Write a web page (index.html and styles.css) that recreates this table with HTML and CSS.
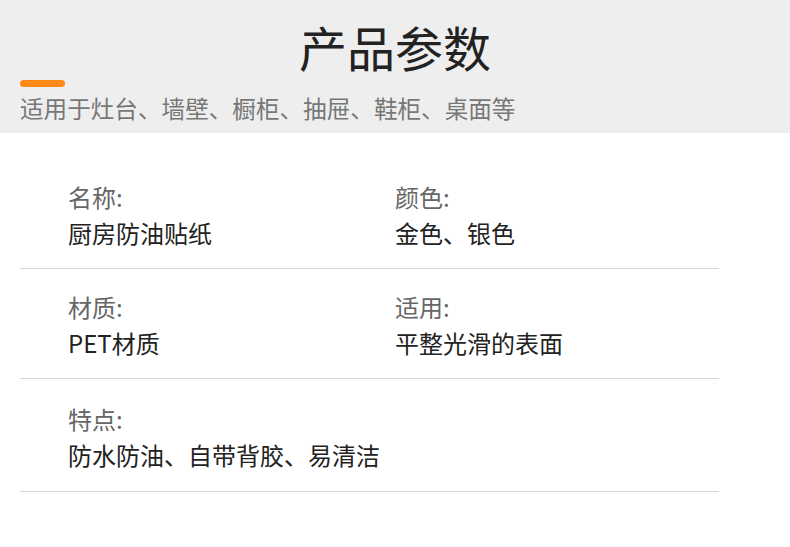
FILE: index.html
```html
<!DOCTYPE html>
<html lang="zh-CN">
<head>
<meta charset="utf-8">
<title>产品参数</title>
<link rel="stylesheet" href="styles.css">
</head>
<body>
<header class="hero">
  <h1 class="hero-title">产品参数</h1>
  <div class="hero-bar"></div>
  <p class="hero-sub">适用于灶台、墙壁、橱柜、抽屉、鞋柜、桌面等</p>
</header>
<main class="specs">
  <div class="spec-row">
    <div class="spec">
      <div class="spec-label">名称:</div>
      <div class="spec-value">厨房防油贴纸</div>
    </div>
    <div class="spec">
      <div class="spec-label">颜色:</div>
      <div class="spec-value">金色、银色</div>
    </div>
  </div>
  <div class="spec-row">
    <div class="spec">
      <div class="spec-label">材质:</div>
      <div class="spec-value">PET材质</div>
    </div>
    <div class="spec">
      <div class="spec-label">适用:</div>
      <div class="spec-value">平整光滑的表面</div>
    </div>
  </div>
  <div class="spec-row spec-row-last">
    <div class="spec">
      <div class="spec-label">特点:</div>
      <div class="spec-value">防水防油、自带背胶、易清洁</div>
    </div>
  </div>
</main>
</body>
</html>
```
FILE: styles.css
```css
* { box-sizing: border-box; }
html, body {
  margin: 0;
  padding: 0;
  background: #ffffff;
  font-family: "Noto Sans CJK SC", "Noto Sans", sans-serif;
}
.hero {
  background: #eeeeee;
  height: 133px;
  padding: 22px 20px 0;
}
.hero-title {
  margin: 0;
  text-align: center;
  font-size: 48px;
  line-height: 48px;
  font-weight: 400;
  color: #222222;
}
.hero-bar {
  margin-top: 10px;
  width: 45px;
  height: 7px;
  border-radius: 4px;
  background: #ff8a17;
}
.hero-sub {
  margin: 9px 0 0;
  font-size: 23.6px;
  line-height: 24px;
  color: #777777;
}
.specs {
  margin: 26px 71px 0 20px;
}
.spec-row {
  display: grid;
  grid-template-columns: 327px 1fr;
  padding: 26px 0 23px 48px;
  border-bottom: 1px solid #d6d6d6;
}
.spec-row-last {
  padding-top: 28px;
  padding-bottom: 24px;
}
.spec-label {
  font-size: 24px;
  line-height: 24px;
  color: #666666;
}
.spec-value {
  margin-top: 12px;
  font-size: 24px;
  line-height: 24px;
  color: #222222;
}
```
